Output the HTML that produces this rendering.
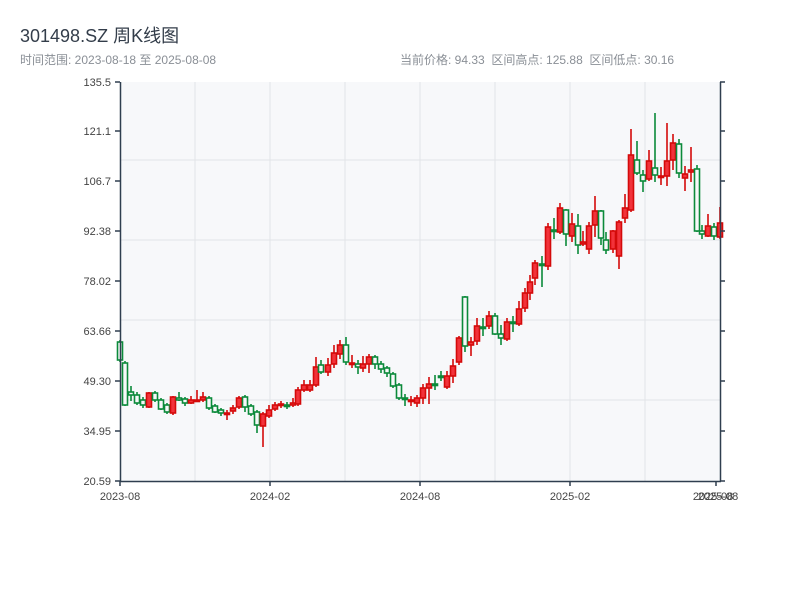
<!DOCTYPE html>
<html><head><meta charset="utf-8"><style>
body{margin:0;width:800px;height:600px;background:#fff;font-family:"Liberation Sans","Noto Sans CJK SC",sans-serif;overflow:hidden;position:relative}
.t{position:absolute;left:20px;top:22px;font-size:18px;color:#333d4a}
.s{position:absolute;top:51px;font-size:12px;color:#8a8f96}
</style></head><body>
<div class="t">301498.SZ 周K线图</div>
<div class="s" style="left:20px">时间范围: 2023-08-18 至 2025-08-08</div>
<div class="s" style="left:400px">当前价格: 94.33 &nbsp;区间高点: 125.88 &nbsp;区间低点: 30.16</div>
<svg id="c" width="800" height="600" style="position:absolute;left:0;top:0" font-family="Liberation Sans, sans-serif" font-size="11" fill="#444">
<rect x="120" y="82" width="600" height="399" fill="#f7f8fa"/>
<g stroke="#e2e4e8" stroke-width="1">
<line x1="195" y1="82" x2="195" y2="481"/><line x1="270" y1="82" x2="270" y2="481"/><line x1="345" y1="82" x2="345" y2="481"/><line x1="420" y1="82" x2="420" y2="481"/><line x1="495" y1="82" x2="495" y2="481"/><line x1="570" y1="82" x2="570" y2="481"/><line x1="645" y1="82" x2="645" y2="481"/>
<line x1="120" y1="160" x2="720" y2="160"/><line x1="120" y1="240" x2="720" y2="240"/><line x1="120" y1="320" x2="720" y2="320"/><line x1="120" y1="400" x2="720" y2="400"/>
</g>
<g id="cd"></g>
<g stroke="#2f3e4f" stroke-width="1.5">
<line x1="120.5" y1="82" x2="120.5" y2="481"/><line x1="720.5" y1="82" x2="720.5" y2="481"/>
<line x1="120" y1="481.5" x2="721" y2="481.5"/>
<line x1="115" y1="82" x2="120" y2="82"/><line x1="115" y1="131" x2="120" y2="131"/><line x1="115" y1="181" x2="120" y2="181"/><line x1="115" y1="231" x2="120" y2="231"/><line x1="115" y1="281" x2="120" y2="281"/><line x1="115" y1="331" x2="120" y2="331"/><line x1="115" y1="381" x2="120" y2="381"/><line x1="115" y1="431" x2="120" y2="431"/><line x1="115" y1="481" x2="120" y2="481"/>
<line x1="720" y1="82" x2="725" y2="82"/><line x1="720" y1="131" x2="725" y2="131"/><line x1="720" y1="181" x2="725" y2="181"/><line x1="720" y1="231" x2="725" y2="231"/><line x1="720" y1="281" x2="725" y2="281"/><line x1="720" y1="331" x2="725" y2="331"/><line x1="720" y1="381" x2="725" y2="381"/><line x1="720" y1="431" x2="725" y2="431"/><line x1="720" y1="481" x2="725" y2="481"/>
<line x1="120" y1="481" x2="120" y2="486"/><line x1="270" y1="481" x2="270" y2="486"/><line x1="420" y1="481" x2="420" y2="486"/><line x1="570" y1="481" x2="570" y2="486"/><line x1="716" y1="481" x2="716" y2="486"/>
</g>
<g text-anchor="end">
<text x="111" y="86">135.5</text><text x="111" y="135">121.1</text><text x="111" y="185">106.7</text><text x="111" y="235">92.38</text><text x="111" y="285">78.02</text><text x="111" y="335">63.66</text><text x="111" y="385">49.30</text><text x="111" y="435">34.95</text><text x="111" y="485">20.59</text>
</g>
<g text-anchor="middle">
<text x="120" y="500">2023-08</text><text x="270" y="500">2024-02</text><text x="420" y="500">2024-08</text><text x="570" y="500">2025-02</text><text x="713" y="500">2025-08</text><text x="718" y="500">2025-08</text>
</g>
</svg>
<script>
var d=[
[120,342,360,340,362,'g'],[125,363,405,361,406,'g'],[131,392,395,386,401,'g'],[137,395,403,392,405,'g'],[143,400,405,397,408,'g'],[149,393,407,392,408,'r'],[155,393,400,391,402,'g'],[161,400,409,398,410,'g'],[167,405,412,403,414,'g'],[173,397,413,396,415,'r'],[179,398,400,392,401,'g'],[185,399,403,397,406,'g'],[191,400,403,396,404,'r'],[197,400,401,390,402,'r'],[203,397,400,392,402,'r'],[209,398,408,396,410,'g'],[215,406,412,404,413,'g'],[221,410,413,408,416,'g'],[227,413,414,410,420,'r'],[233,408,411,405,414,'r'],[239,398,407,396,409,'r'],[245,397,407,395,412,'g'],[251,406,414,404,416,'g'],[257,412,425,410,433,'g'],[263,414,426,412,447,'r'],[269,410,416,405,418,'r'],[275,405,409,402,411,'r'],[281,404,405,401,408,'r'],[287,405,406,402,409,'g'],[293,403,405,398,407,'r'],[298,390,404,387,406,'r'],[304,385,390,380,392,'r'],[310,385,390,380,392,'r'],[316,367,385,357,387,'r'],[321,365,372,360,374,'g'],[328,365,372,358,376,'r'],[334,353,364,345,368,'r'],[340,345,354,340,359,'r'],[346,345,362,337,365,'g'],[352,363,364,355,368,'r'],[358,364,367,360,374,'g'],[363,364,368,356,372,'r'],[369,357,364,354,373,'r'],[375,357,364,355,369,'g'],[381,364,369,361,373,'g'],[387,368,373,366,377,'g'],[393,374,386,372,388,'g'],[399,385,398,383,400,'g'],[405,398,399,394,406,'g'],[411,400,401,396,406,'r'],[417,398,403,395,407,'r'],[423,388,398,384,404,'r'],[429,384,388,377,404,'r'],[435,384,385,375,390,'g'],[441,376,377,371,381,'g'],[447,376,387,371,389,'r'],[453,366,376,359,383,'r'],[459,338,362,336,365,'r'],[465,297,346,296,352,'g'],[471,342,345,337,356,'r'],[477,326,341,318,345,'r'],[483,327,328,318,336,'g'],[489,316,326,311,329,'r'],[495,316,334,313,335,'g'],[501,334,338,325,345,'g'],[507,322,339,318,341,'r'],[513,322,323,316,332,'g'],[519,309,324,301,326,'r'],[525,293,308,288,312,'r'],[530,282,293,275,300,'r'],[535,263,278,260,285,'r'],[542,264,265,256,287,'g'],[548,227,266,223,270,'r'],[554,230,231,218,239,'g'],[560,208,232,203,234,'r'],[566,210,234,209,246,'g'],[572,224,236,213,242,'r'],[578,226,245,214,254,'g'],[583,242,244,231,246,'r'],[589,226,249,222,254,'r'],[595,211,225,196,237,'r'],[601,211,238,210,245,'g'],[606,240,250,232,254,'g'],[613,231,249,230,253,'r'],[619,222,256,220,269,'r'],[625,208,218,194,223,'r'],[631,155,210,129,212,'r'],[637,160,173,141,175,'g'],[643,175,181,170,192,'g'],[649,161,179,150,181,'r'],[655,168,175,113,182,'g'],[661,176,177,167,185,'r'],[667,161,176,123,186,'r'],[673,143,160,134,170,'r'],[679,144,173,139,178,'g'],[685,174,178,166,191,'r'],[691,170,172,147,182,'r'],[697,169,231,165,232,'g'],[702,231,234,225,239,'g'],[708,226,236,214,237,'r'],[714,227,236,223,240,'g'],[720,223,237,207,239,'r']];
var s='';
d.forEach(function(c){var col=c[5]=='r'?'#d40a0a':'#0b8a3a';var h=Math.max(c[2]-c[1],1.5);
s+='<line x1="'+c[0]+'" y1="'+c[3]+'" x2="'+c[0]+'" y2="'+c[4]+'" stroke="'+col+'" stroke-width="1.6"/>';
s+='<rect x="'+(c[0]-2.5)+'" y="'+c[1]+'" width="5" height="'+h+'" fill="'+(c[5]=='r'?'#f2323a':'#f7f8fa')+'" stroke="'+col+'" stroke-width="1.6"/>';});
document.getElementById('cd').innerHTML=s;
</script>
</body></html>
